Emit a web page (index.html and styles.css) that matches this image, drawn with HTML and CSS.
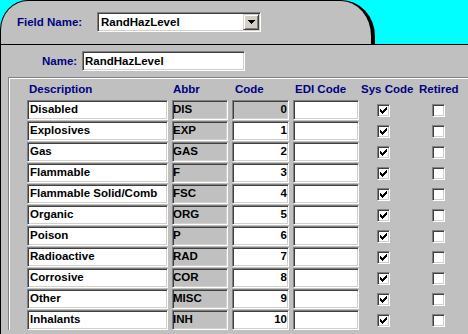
FILE: index.html
```html
<!DOCTYPE html>
<html lang="en">
<head>
  <meta charset="UTF-8" />
  <title>Field Codes</title>
  <link rel="stylesheet" href="styles.css">
</head>
<body>

  <!-- top tab -->
  <div class="topbar">
    <div class="tab">
      <div class="line">
        <span class="label field-label">Field Name:</span>
        <div class="field combo">
          <span class="combo-text">RandHazLevel</span>
          <span class="drop">
            <svg width="7" height="4" viewBox="0 0 7 4" shape-rendering="crispEdges"><path d="M0 0h7v1h-7z M1 1h5v1h-5z M2 2h3v1h-3z M3 3h1v1h-1z" fill="#000"/></svg>
          </span>
        </div>
      </div>
    </div>
  </div>

  <div class="panel">
    <div class="line name-line">
      <span class="label name-label">Name:</span>
      <div class="field name-field">RandHazLevel</div>
    </div>

    <!-- codes group -->
    <div class="group">
      <div class="head">
        <span class="c-desc">Description</span>
        <span class="c-abbr">Abbr</span>
        <span class="c-code">Code</span>
        <span class="c-edi">EDI Code</span>
        <span class="c-sys">Sys Code</span>
        <span class="c-ret">Retired</span>
      </div>

      <div class="row">
        <div class="field desc">Disabled</div>
        <div class="field abbr">DIS</div>
        <div class="field code off">0</div>
        <div class="field edi"></div>
        <div class="check sys"><svg width="7" height="7" viewBox="0 0 7 7" shape-rendering="crispEdges"><path d="M6 0h1v1h-1z M5 1h2v1h-2z M0 2h1v1h-1z M4 2h3v1h-3z M0 3h2v1h-2z M3 3h3v1h-3z M0 4h5v1h-5z M1 5h3v1h-3z M2 6h1v1h-1z"/></svg></div>
        <div class="check ret"></div>
      </div>
      <div class="row">
        <div class="field desc">Explosives</div>
        <div class="field abbr">EXP</div>
        <div class="field code">1</div>
        <div class="field edi"></div>
        <div class="check sys"><svg width="7" height="7" viewBox="0 0 7 7" shape-rendering="crispEdges"><path d="M6 0h1v1h-1z M5 1h2v1h-2z M0 2h1v1h-1z M4 2h3v1h-3z M0 3h2v1h-2z M3 3h3v1h-3z M0 4h5v1h-5z M1 5h3v1h-3z M2 6h1v1h-1z"/></svg></div>
        <div class="check ret"></div>
      </div>
      <div class="row">
        <div class="field desc">Gas</div>
        <div class="field abbr">GAS</div>
        <div class="field code">2</div>
        <div class="field edi"></div>
        <div class="check sys"><svg width="7" height="7" viewBox="0 0 7 7" shape-rendering="crispEdges"><path d="M6 0h1v1h-1z M5 1h2v1h-2z M0 2h1v1h-1z M4 2h3v1h-3z M0 3h2v1h-2z M3 3h3v1h-3z M0 4h5v1h-5z M1 5h3v1h-3z M2 6h1v1h-1z"/></svg></div>
        <div class="check ret"></div>
      </div>
      <div class="row">
        <div class="field desc">Flammable</div>
        <div class="field abbr">F</div>
        <div class="field code">3</div>
        <div class="field edi"></div>
        <div class="check sys"><svg width="7" height="7" viewBox="0 0 7 7" shape-rendering="crispEdges"><path d="M6 0h1v1h-1z M5 1h2v1h-2z M0 2h1v1h-1z M4 2h3v1h-3z M0 3h2v1h-2z M3 3h3v1h-3z M0 4h5v1h-5z M1 5h3v1h-3z M2 6h1v1h-1z"/></svg></div>
        <div class="check ret"></div>
      </div>
      <div class="row">
        <div class="field desc">Flammable Solid/Comb</div>
        <div class="field abbr">FSC</div>
        <div class="field code">4</div>
        <div class="field edi"></div>
        <div class="check sys"><svg width="7" height="7" viewBox="0 0 7 7" shape-rendering="crispEdges"><path d="M6 0h1v1h-1z M5 1h2v1h-2z M0 2h1v1h-1z M4 2h3v1h-3z M0 3h2v1h-2z M3 3h3v1h-3z M0 4h5v1h-5z M1 5h3v1h-3z M2 6h1v1h-1z"/></svg></div>
        <div class="check ret"></div>
      </div>
      <div class="row">
        <div class="field desc">Organic</div>
        <div class="field abbr">ORG</div>
        <div class="field code">5</div>
        <div class="field edi"></div>
        <div class="check sys"><svg width="7" height="7" viewBox="0 0 7 7" shape-rendering="crispEdges"><path d="M6 0h1v1h-1z M5 1h2v1h-2z M0 2h1v1h-1z M4 2h3v1h-3z M0 3h2v1h-2z M3 3h3v1h-3z M0 4h5v1h-5z M1 5h3v1h-3z M2 6h1v1h-1z"/></svg></div>
        <div class="check ret"></div>
      </div>
      <div class="row">
        <div class="field desc">Poison</div>
        <div class="field abbr">P</div>
        <div class="field code">6</div>
        <div class="field edi"></div>
        <div class="check sys"><svg width="7" height="7" viewBox="0 0 7 7" shape-rendering="crispEdges"><path d="M6 0h1v1h-1z M5 1h2v1h-2z M0 2h1v1h-1z M4 2h3v1h-3z M0 3h2v1h-2z M3 3h3v1h-3z M0 4h5v1h-5z M1 5h3v1h-3z M2 6h1v1h-1z"/></svg></div>
        <div class="check ret"></div>
      </div>
      <div class="row">
        <div class="field desc">Radioactive</div>
        <div class="field abbr">RAD</div>
        <div class="field code">7</div>
        <div class="field edi"></div>
        <div class="check sys"><svg width="7" height="7" viewBox="0 0 7 7" shape-rendering="crispEdges"><path d="M6 0h1v1h-1z M5 1h2v1h-2z M0 2h1v1h-1z M4 2h3v1h-3z M0 3h2v1h-2z M3 3h3v1h-3z M0 4h5v1h-5z M1 5h3v1h-3z M2 6h1v1h-1z"/></svg></div>
        <div class="check ret"></div>
      </div>
      <div class="row">
        <div class="field desc">Corrosive</div>
        <div class="field abbr">COR</div>
        <div class="field code">8</div>
        <div class="field edi"></div>
        <div class="check sys"><svg width="7" height="7" viewBox="0 0 7 7" shape-rendering="crispEdges"><path d="M6 0h1v1h-1z M5 1h2v1h-2z M0 2h1v1h-1z M4 2h3v1h-3z M0 3h2v1h-2z M3 3h3v1h-3z M0 4h5v1h-5z M1 5h3v1h-3z M2 6h1v1h-1z"/></svg></div>
        <div class="check ret"></div>
      </div>
      <div class="row">
        <div class="field desc">Other</div>
        <div class="field abbr">MISC</div>
        <div class="field code">9</div>
        <div class="field edi"></div>
        <div class="check sys"><svg width="7" height="7" viewBox="0 0 7 7" shape-rendering="crispEdges"><path d="M6 0h1v1h-1z M5 1h2v1h-2z M0 2h1v1h-1z M4 2h3v1h-3z M0 3h2v1h-2z M3 3h3v1h-3z M0 4h5v1h-5z M1 5h3v1h-3z M2 6h1v1h-1z"/></svg></div>
        <div class="check ret"></div>
      </div>
      <div class="row">
        <div class="field desc">Inhalants</div>
        <div class="field abbr">INH</div>
        <div class="field code">10</div>
        <div class="field edi"></div>
        <div class="check sys"><svg width="7" height="7" viewBox="0 0 7 7" shape-rendering="crispEdges"><path d="M6 0h1v1h-1z M5 1h2v1h-2z M0 2h1v1h-1z M4 2h3v1h-3z M0 3h2v1h-2z M3 3h3v1h-3z M0 4h5v1h-5z M1 5h3v1h-3z M2 6h1v1h-1z"/></svg></div>
        <div class="check ret"></div>
      </div>
    </div>
  </div>

</body>
</html>
```

FILE: styles.css
```css
body {
  margin: 0;
  width: 468px;
  height: 334px;
  overflow: hidden;
  background-color: #c0c0c0;
  font: bold 11.5px "Liberation Sans", Arial, sans-serif;
  color: #000;
}

/* top tab */
.topbar {
  height: 44px;
  background-color: #00ffff;
  border-bottom: 1px solid #000;
  display: flex;
}
.tab {
  box-sizing: border-box;
  width: 375px;
  height: 44px;
  background-color: #c0c0c0;
  border: solid #000;
  border-width: 1px 4px 0 1px;
  border-radius: 28px 34px 0 0 / 30px 36px 0 0;
  padding: 11px 0 0 16px;
}

.line {
  display: flex;
  align-items: center;
}
.label {
  color: #000080;
  line-height: 14px;
  white-space: nowrap;
}
.field-label { width: 80px; }
.name-label { width: 40px; }

/* sunken edit boxes */
.field {
  box-sizing: border-box;
  height: 20px;
  background-color: #fff;
  border: 1px solid;
  border-color: #808080 #fff #fff #808080;
  box-shadow: inset 1px 1px #404040, inset -1px -1px #d4d0c8;
  line-height: 14px;
  padding: 1px 1px 0 2px;
  white-space: nowrap;
  overflow: hidden;
}

.combo {
  width: 164px;
  display: flex;
  padding: 1px;
}
.combo-text {
  flex: 1;
  padding: 1px 0 0 2px;
}
.drop {
  box-sizing: border-box;
  width: 16px;
  height: 16px;
  background-color: #d4d0c8;
  border: 1px solid;
  border-color: #d4d0c8 #404040 #404040 #d4d0c8;
  box-shadow: inset 1px 1px #fff, inset -1px -1px #808080;
  display: flex;
  align-items: center;
  justify-content: center;
}
.drop svg { display: block; }

/* lower panel */
.panel {
  box-sizing: border-box;
  height: 289px;
  overflow: hidden;
  border-left: 1px solid #000;
  padding-top: 6px;
}
.name-line { padding-left: 41px; }
.name-field {
  width: 163px;
  padding-top: 2px;
}

.group {
  margin: 6px 0 0 7px;
  border-top: 1px solid #808080;
  border-left: 1px solid #808080;
  box-shadow: inset 1px 1px #fff;
  padding: 4px 0 0 18px;
}

.head {
  display: flex;
  gap: 4px;
  height: 14px;
  line-height: 14px;
  color: #000080;
  margin-bottom: 4px;
  white-space: nowrap;
}
.head span { box-sizing: border-box; }
.head .c-desc { width: 141px; padding-left: 2px; }
.head .c-abbr { width: 56px; padding-left: 1px; }
.head .c-code { width: 57px; padding-left: 3px; }
.head .c-edi { width: 66px; padding-left: 2px; }
.head .c-sys { width: 54px; margin-left: -2px; }

.row {
  display: flex;
  align-items: center;
  gap: 4px;
  height: 20px;
  margin-bottom: 1px;
}
.desc { width: 141px; }
.abbr {
  width: 56px;
  padding-left: 0;
  background-color: #c0c0c0;
}
.code {
  width: 57px;
  text-align: right;
  padding-right: 1px;
}
.code.off { background-color: #c0c0c0; }
.edi { width: 66px; }

/* check boxes */
.check {
  box-sizing: border-box;
  width: 13px;
  height: 13px;
  background-color: #fff;
  border: 1px solid;
  border-color: #808080 #fff #fff #808080;
  box-shadow: inset 1px 1px #404040, inset -1px -1px #d4d0c8;
  padding: 2px 0 0 2px;
}
.check svg { display: block; }
.sys { margin-left: 14px; }
.ret { margin-left: 38px; }
```
